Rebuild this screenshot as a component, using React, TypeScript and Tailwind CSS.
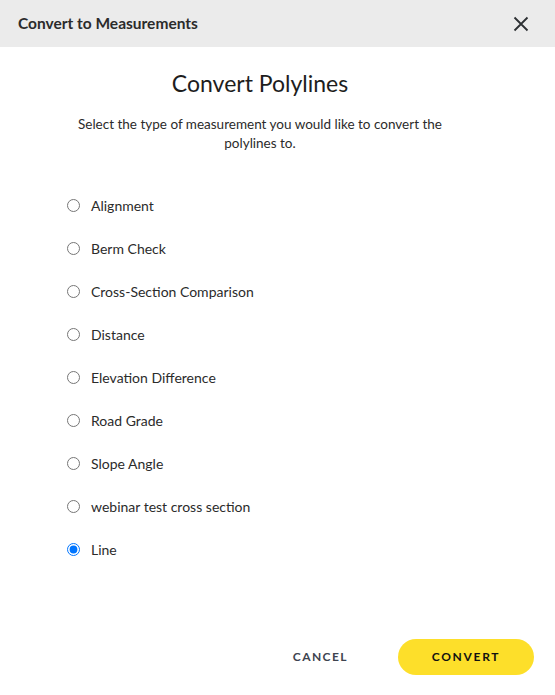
import { useState } from 'react'

const options = [
  'Alignment',
  'Berm Check',
  'Cross-Section Comparison',
  'Distance',
  'Elevation Difference',
  'Road Grade',
  'Slope Angle',
  'webinar test cross section',
  'Line',
]

export default function App() {
  const [selected, setSelected] = useState('Line')

  return (
    <div className="flex h-[695px] w-[555px] flex-col bg-white font-['Lato',sans-serif] text-[#1d1d1d]">
      <div className="flex h-[47px] items-center justify-between bg-[#ebebeb] pl-[18px] pr-[26px]">
        <h2 className="text-[15.5px] font-bold text-[#2b2b2b]">Convert to Measurements</h2>
        <button className="text-[#2d3033]">
          <svg width="16" height="16" viewBox="0 0 16 16" fill="none" stroke="currentColor" strokeWidth="1.8">
            <path d="M1.5 1.5 14.5 14.5M14.5 1.5 1.5 14.5" />
          </svg>
        </button>
      </div>

      <div className="flex flex-1 flex-col">
        <div className="pr-[35px]">
          <h1 className="mt-[20px] text-center text-[23px] leading-[32px]">Convert Polylines</h1>
          <p className="mx-auto mt-[16px] w-[400px] text-center text-[13.5px] leading-[19px] text-[#2b2b2b]">
            Select the type of measurement you would like to convert the polylines to.
          </p>
        </div>

        <div className="mt-[42px] flex flex-col gap-[23px] pl-[67px]">
          {options.map((opt) => (
            <label key={opt} className="flex h-[20px] items-center gap-[11px] text-[14px] text-[#2b2b2b]">
              <input
                type="radio"
                name="measure"
                checked={selected === opt}
                onChange={() => setSelected(opt)}
                className="m-0 h-[13px] w-[13px]"
              />
              {opt}
            </label>
          ))}
        </div>

        <div className="mt-auto mb-[20px] flex items-center justify-end gap-[50px] pr-[21px]">
          <button className="text-[12px] font-bold tracking-[0.12em] text-[#3e4450]">CANCEL</button>
          <button className="h-[36px] w-[136px] rounded-full bg-[#fddf2a] text-[12px] font-bold tracking-[0.14em] text-[#111]">
            CONVERT
          </button>
        </div>
      </div>
    </div>
  )
}
